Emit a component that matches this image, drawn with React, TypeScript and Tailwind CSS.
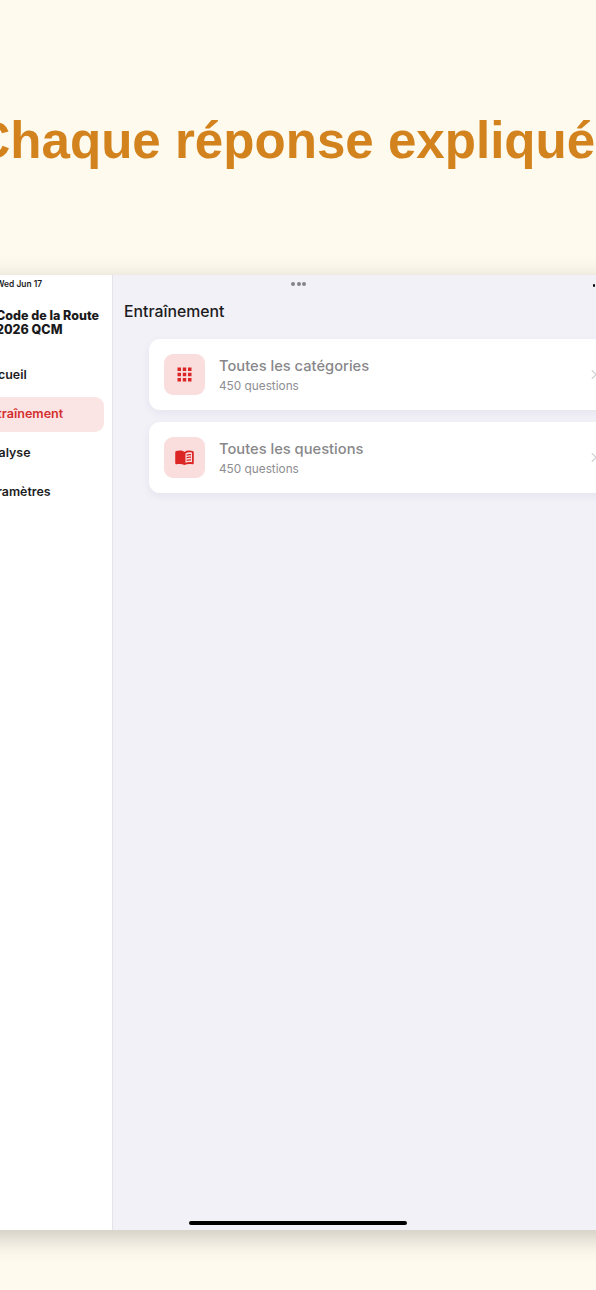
import React from "react"
import { MdApps } from "react-icons/md"

interface NavItem {
  label: string
  active?: boolean
}

interface QuizCardProps {
  icon: React.ComponentType<{ className?: string }>
  title: string
  subtitle: string
}

const BookIcon: React.FC<{ className?: string }> = ({ className }) => (
  <svg viewBox="0 0 24 24" fill="currentColor" fillRule="evenodd" className={className}>
    <path d="M12 5.600C10.400 4.500 8.600 4.100 6.600 4.100c-1.600 0-3 .2-4.200.6C1.800 5 1.400 5.600 1.400 6.500V18.400c0 1 .7 1.600 1.600 1.400 1.200-.3 2.300-.5 3.600-.5 1.900 0 3.700.3 5.400 1.200 1.700-.9 3.500-1.200 5.400-1.200 1.300 0 2.400.2 3.600.5.900.2 1.600-.4 1.600-1.400V6.500c0-.9-.4-1.500-1.200-1.800-1.200-.4-2.400-.6-4-.6-2 0-3.800.4-5.400 1.500Zm1.100 1.700c1.400-.8 2.900-1.200 4.600-1.200 1.200 0 2 .1 2.900.4v10.900c-1-.2-1.800-.3-2.900-.3-1.700 0-3.200.3-4.600.9V7.300Z" />
    <path d="M14.400 8.500c1.700-.6 3.400-.8 5.100-.5v1.500c-1.700-.3-3.400-.1-5.100.5V8.500Zm0 3c1.700-.6 3.400-.8 5.100-.5v1.500c-1.700-.3-3.400-.1-5.100.5v-1.500Zm0 3c1.700-.6 3.400-.8 5.100-.5v1.500c-1.700-.3-3.400-.1-5.100.5v-1.500Z" />
  </svg>
)

const navItems: NavItem[] = [
  { label: "Accueil" },
  { label: "Entraînement", active: true },
  { label: "Analyse" },
  { label: "Paramètres" },
]

const cards: QuizCardProps[] = [
  { icon: MdApps, title: "Toutes les catégories", subtitle: "450 questions" },
  { icon: BookIcon, title: "Toutes les questions", subtitle: "450 questions" },
]

const QuizCard: React.FC<QuizCardProps> = ({ icon: Icon, title, subtitle }) => (
  <div className="flex h-[71px] items-center rounded-[11px] bg-white pl-[15px] pr-[14px] shadow-[0_3px_10px_rgba(30,30,60,0.06)]">
    <div className="flex size-[41px] shrink-0 items-center justify-center rounded-[9px] bg-[#fadede] pr-px">
      <Icon className="size-[21px] text-[#dc2626]" />
    </div>
    <div className="ml-[14px] flex-1 pt-[2px]">
      <h2 className="text-[14.7px] leading-[20px] font-[540] text-[#87878a]">{title}</h2>
      <p className="mt-px text-[11.8px] leading-[18px] text-[#8e8e93]">{subtitle}</p>
    </div>
    <svg viewBox="0 0 7 12" className="mr-[9px] h-[11px] w-[6px] shrink-0" fill="none" stroke="#d4d4d9" strokeWidth="1.6">
      <path d="M1 1l5 5-5 5" />
    </svg>
  </div>
)

const Sidebar: React.FC = () => (
  <aside className="flex w-[173px] shrink-0 flex-col border-r border-[#e4e3ea] bg-white">
    <span className="mt-[3px] pl-[56px] text-[8.4px] leading-[12px] font-semibold text-[#1c1c1e]">Wed Jun 17</span>
    <p className="mt-[19px] whitespace-nowrap pl-[56px] text-[12.5px] leading-[14px] font-extrabold text-[#1a1a1c]">
      Code de la Route
      <br />
      2026 QCM
    </p>
    <nav className="mt-[21px] flex flex-col gap-[4px] px-[8px]">
      {navItems.map((item) => (
        <div
          key={item.label}
          className={
            item.active
              ? "flex h-[35px] items-center rounded-[9px] bg-[#fbe4e4] pl-[34px] text-[12.6px] font-semibold text-[#d32f2f]"
              : "flex h-[35px] items-center rounded-[9px] pl-[34px] text-[12.4px] font-semibold text-[#1c1c1e]"
          }
        >
          {item.label}
        </div>
      ))}
    </nav>
  </aside>
)

const StatusBar: React.FC = () => (
  <div className="flex h-[17px] items-center">
    <div className="ml-[178px] flex gap-[1.5px]">
      <span className="size-[4px] rounded-full bg-[#85848b]" />
      <span className="size-[4px] rounded-full bg-[#85848b]" />
      <span className="size-[4px] rounded-full bg-[#85848b]" />
    </div>
    <div className="ml-[287px] flex items-end gap-px pt-[3px]">
      <span className="h-[3px] w-[2px] rounded-[1px] bg-black" />
      <span className="h-[4px] w-[2px] rounded-[1px] bg-black" />
    </div>
  </div>
)

export default function App() {
  return (
    <div className="flex h-[1290px] w-[596px] flex-col items-center overflow-hidden bg-[#fffaee] font-['Inter',sans-serif]">
      <div className="flex h-[275px] shrink-0 justify-center pt-[112px] pl-px">
        <h1 className="whitespace-nowrap font-['Liberation_Sans',sans-serif] text-[51.1px] leading-[58px] font-bold text-[#d3831d]">
          Chaque réponse expliquée
        </h1>
      </div>

      <div className="flex h-[955px] w-[716px] shrink-0 bg-[#f2f1f8] shadow-[0_7px_24px_rgba(0,0,0,0.21)]">
        <Sidebar />
        <div className="flex flex-1 flex-col">
          <StatusBar />
          <h2 className="mt-[9px] pl-[11px] text-[15.8px] leading-[22px] font-medium text-[#1c1c1e]">Entraînement</h2>
          <div className="mt-[16px] flex flex-col gap-[12px] px-[36px]">
            {cards.map((card) => (
              <QuizCard key={card.title} {...card} />
            ))}
          </div>
          <div className="mt-auto mb-[5px] ml-[76px] h-[4px] w-[218px] rounded-full bg-black" />
        </div>
      </div>
    </div>
  )
}
